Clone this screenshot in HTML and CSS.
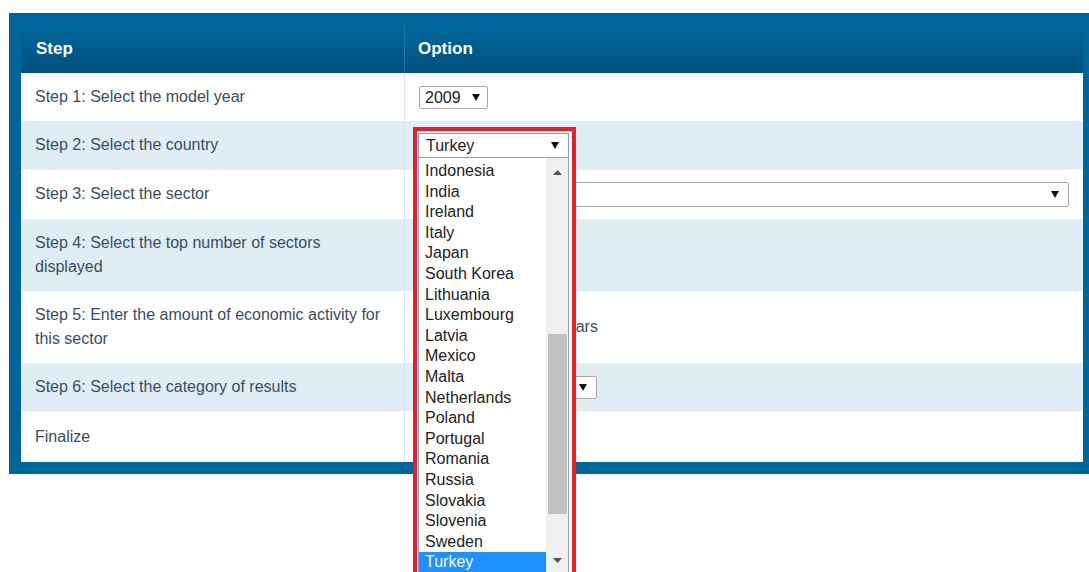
FILE: index.html
```html
<!DOCTYPE html>
<html lang="en">
<head>
<meta charset="utf-8">
<title>Economic Input-Output Model</title>
<link rel="stylesheet" href="styles.css">
</head>
<body>
<div class="frame">
  <table class="steps">
    <thead>
      <tr><th class="col-step">Step</th><th class="col-opt">Option</th></tr>
    </thead>
    <tbody>
      <tr>
        <td>Step 1: Select the model year</td>
        <td class="opt"><span class="sel sel-year">2009<svg class="caret" viewBox="0 0 8 7"><path d="M0 0H8L4 7Z"/></svg></span></td>
      </tr>
      <tr class="alt">
        <td>Step 2: Select the country</td>
        <td class="opt"><span class="sel sel-country"><svg class="caret" viewBox="0 0 8 7"><path d="M0 0H8L4 7Z"/></svg></span></td>
      </tr>
      <tr>
        <td>Step 3: Select the sector</td>
        <td class="opt"><span class="sel sel-sector"><svg class="caret" viewBox="0 0 8 7"><path d="M0 0H8L4 7Z"/></svg></span></td>
      </tr>
      <tr class="alt">
        <td>Step 4: Select the top number of sectors displayed</td>
        <td class="opt"><span class="sel sel-top"><svg class="caret" viewBox="0 0 8 7"><path d="M0 0H8L4 7Z"/></svg></span></td>
      </tr>
      <tr>
        <td>Step 5: Enter the amount of economic activity for this sector</td>
        <td class="opt"><span class="amount-row"><span class="amount"></span><span class="unit">million dollars</span></span></td>
      </tr>
      <tr class="alt">
        <td>Step 6: Select the category of results</td>
        <td class="opt"><span class="sel sel-cat"><svg class="caret" viewBox="0 0 8 7"><path d="M0 0H8L4 7Z"/></svg></span></td>
      </tr>
      <tr>
        <td class="final">Finalize</td>
        <td class="opt final"></td>
      </tr>
    </tbody>
  </table>
</div>

<!-- open country dropdown, outlined -->
<div class="picker">
  <div class="picker-head">Turkey<svg class="caret" viewBox="0 0 8 7"><path d="M0 0H8L4 7Z"/></svg></div>
  <div class="listbox">
    <ul class="options">
      <li>Indonesia</li>
      <li>India</li>
      <li>Ireland</li>
      <li>Italy</li>
      <li>Japan</li>
      <li>South Korea</li>
      <li>Lithuania</li>
      <li>Luxembourg</li>
      <li>Latvia</li>
      <li>Mexico</li>
      <li>Malta</li>
      <li>Netherlands</li>
      <li>Poland</li>
      <li>Portugal</li>
      <li>Romania</li>
      <li>Russia</li>
      <li>Slovakia</li>
      <li>Slovenia</li>
      <li>Sweden</li>
      <li class="chosen">Turkey</li>
    </ul>
    <div class="scrollbar">
      <div class="sb-btn sb-up"><svg viewBox="0 0 9 5"><path d="M0 5L4.5 0L9 5Z"/></svg></div>
      <div class="sb-track"><div class="sb-thumb"></div></div>
      <div class="sb-btn sb-down"><svg viewBox="0 0 9 5"><path d="M0 0H9L4.5 5Z"/></svg></div>
    </div>
  </div>
</div>
</body>
</html>
```

FILE: styles.css
```css
html {
  overflow: hidden;
}

body {
  margin: 0;
  padding: 13px 0 0 9px;
  background: #fff;
  font-family: "Liberation Sans", Arial, sans-serif;
  position: relative;
  height: 559px;
}

.frame {
  width: 1062px;
  border: 12px solid #00659a;
  border-right-width: 6px;
  background: #fff;
}

.steps {
  width: 1062px;
  border-collapse: collapse;
  table-layout: fixed;
}

.steps th {
  height: 48px;
  padding: 0 14px 0 15px;
  text-align: left;
  color: #fff;
  font-size: 17px;
  font-weight: bold;
  background: linear-gradient(#00679b, #00517f);
}

.steps th.col-step {
  width: 354px;
}

.steps th.col-opt {
  padding-left: 13px;
  border-left: 1px solid #1f78a9;
}

.steps td {
  padding: 12px 14px;
  font-size: 16px;
  line-height: 24px;
  color: #3a4d60;
  vertical-align: middle;
  background: #fff;
}

.steps tr.alt td {
  background: #e1edf4;
}

.steps td.opt {
  border-left: 1px solid #d7e6f0;
}

.steps td.final {
  padding-top: 14px;
  padding-bottom: 13px;
}

/* closed select boxes */
.sel {
  display: inline-flex;
  align-items: center;
  justify-content: space-between;
  box-sizing: border-box;
  height: 23px;
  padding: 0 7px 0 5px;
  border: 1px solid #a9a9a9;
  border-radius: 2px;
  background: #fff;
  color: #222;
  font-size: 16px;
  line-height: 20px;
  vertical-align: middle;
}

.caret {
  width: 8px;
  height: 7px;
  fill: #111;
  flex: none;
  margin-left: auto;
}

.sel-year {
  width: 69px;
  height: 23px;
}

.sel-country {
  width: 151px;
}

.sel-sector {
  width: 650px;
  height: 25px;
  padding-right: 9px;
}

.sel-top {
  width: 52px;
}

.sel-cat {
  width: 178px;
  padding-right: 9px;
}

.amount-row {
  display: inline-flex;
  align-items: center;
  gap: 6px;
  vertical-align: middle;
}

.amount {
  box-sizing: border-box;
  width: 76px;
  height: 24px;
  border: 1px solid #a9a9a9;
  background: #fff;
}

/* dropdown popup */
.picker {
  position: absolute;
  left: 413px;
  top: 127px;
  width: 151px;
  padding: 2px 3px 0 1px;
  border: 4px solid #ee1c25;
  border-bottom: none;
  background: #fff;
}

.picker-head {
  box-sizing: border-box;
  width: 151px;
  height: 25px;
  display: flex;
  align-items: center;
  justify-content: space-between;
  padding: 0 9px 0 7px;
  border: 1px solid #7b9fd0;
  background: #fff;
  color: #222;
  font-size: 16px;
}

.listbox {
  box-sizing: border-box;
  width: 151px;
  display: flex;
  border: 1px solid #86a6d2;
  border-top: none;
  padding: 3px 0 1px;
  background: #fff;
}

.options {
  list-style: none;
  margin: 0;
  padding: 0;
  width: 127px;
  flex: none;
}

.options li {
  height: 20.6px;
  line-height: 20.6px;
  padding-left: 6px;
  font-size: 16px;
  color: #222;
  white-space: nowrap;
}

.options li.chosen {
  background: #1e90ff;
  color: #fff;
}

.scrollbar {
  flex: 1;
  display: flex;
  flex-direction: column;
  background: #f0f0f0;
  margin: -3px 0 -1px;
}

.sb-btn {
  display: flex;
  align-items: center;
  justify-content: center;
}

.sb-btn svg {
  width: 9px;
  height: 5px;
  fill: #505050;
}

.sb-up {
  height: 28px;
}

.sb-down {
  height: 26px;
}

.sb-track {
  flex: 1;
  padding: 0 1px 0 2px;
}

.sb-thumb {
  margin-top: 148px;
  height: 180px;
  background: #c1c1c1;
}
```
